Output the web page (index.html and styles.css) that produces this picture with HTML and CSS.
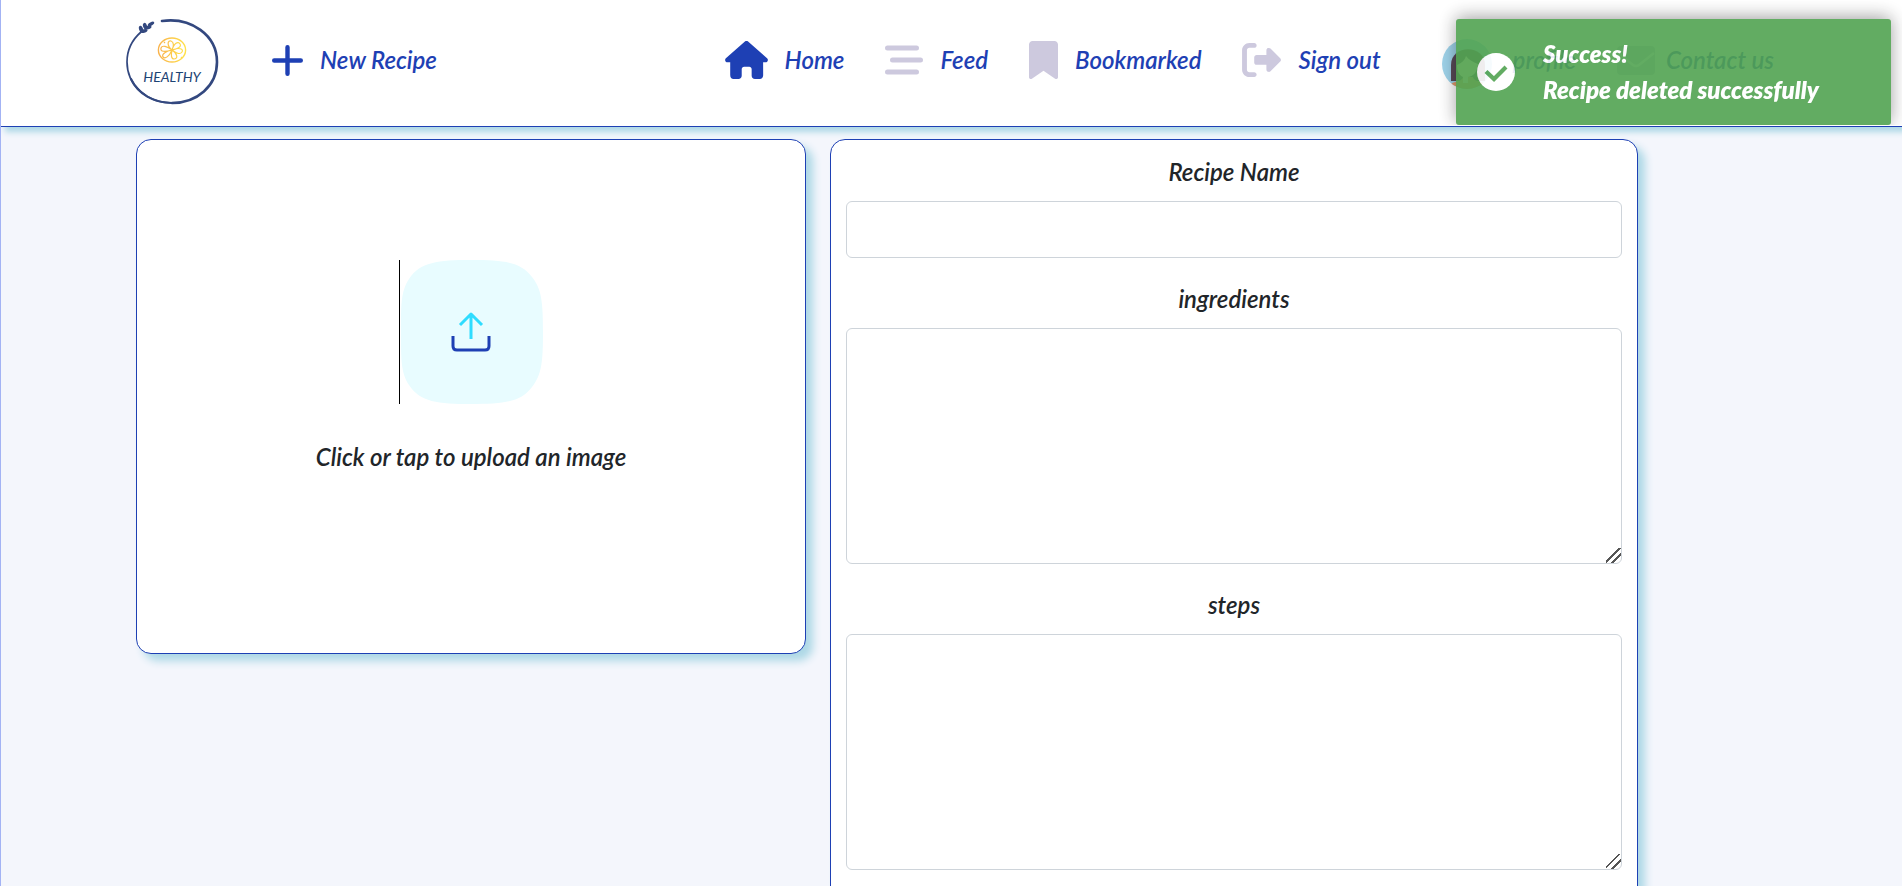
FILE: index.html
```html
<!DOCTYPE html>
<html lang="en">
<head>
<meta charset="utf-8">
<title>New Recipe</title>
<link rel="stylesheet" href="styles.css">
</head>
<body>
<header class="header">
  <a class="logo" href="#" aria-label="Healthy">
    <svg width="100" height="92" viewBox="0 0 100 92">
      <g fill="none" stroke="#33487f" stroke-linecap="round">
        <path d="M39 4C68 0 94 18 94 45C94 69 74 86 49 86" stroke-width="2.6"/>
        <path d="M49 86C24 86 4 68 4 45C4 33 10 22 18 15" stroke-width="1.7"/>
        <path d="M49 86C31 86 15 77 8 62" stroke-width="2.2"/>
      </g>
      <g fill="#33487f">
        <ellipse cx="18" cy="12" rx="3.4" ry="2" transform="rotate(75 18 12)"/>
        <ellipse cx="22" cy="9" rx="3.2" ry="2" transform="rotate(75 22 9)"/>
        <ellipse cx="21" cy="14" rx="3.6" ry="1.8" transform="rotate(-15 21 14)"/>
        <ellipse cx="25" cy="10.500" rx="3.6" ry="1.8" transform="rotate(-15 25 10.500)"/>
        <ellipse cx="28" cy="7" rx="3.6" ry="1.6" transform="rotate(-30 28 7)"/>
      </g>
      <defs>
        <linearGradient id="citrus"><stop offset="0" stop-color="#f9b34c"/><stop offset="1" stop-color="#ffe14a"/></linearGradient>
      </defs>
      <g fill="none" stroke="url(#citrus)">
        <ellipse cx="49" cy="33" rx="13.600" ry="12" stroke-width="1.4"/>
        <path stroke-width="1.2" d="M49 33C43 28 45 23 48 24C51 25 51 29 49 33C51 26 55 24 57 27C59 30 54 32 49 33C56 30 61 32 59 35C57 38 53 36 49 33C55 37 55 42 51 42C48 42 48 38 49 33C46 40 42 42 40 40C38 37 44 34 49 33C42 35 37 35 38 31C39 28 44 29 49 33M41 25l1 1M58 40l1 1"/>
      </g>
      <text class="logo-text" x="49" y="65" text-anchor="middle">HEALTHY</text>
    </svg>
  </a>
  <a class="nav-link" href="#">
    <svg width="31" height="31" viewBox="0 0 31 31" stroke="currentColor" stroke-width="4.4" stroke-linecap="round"><path d="M15.500 2.200v26.600M2.200 15.500h26.600"/></svg>
    <span>New Recipe</span>
  </a>
  <nav class="nav">
    <a class="nav-link" href="#">
      <svg width="43" height="38" viewBox="0 0 576 512" fill="currentColor"><path d="M575.800 255.500c0 18-15 32.100-32 32.100h-32l.7 170c0 34-20 54-45 54h-65c-28 0-45-18-45-43V380c0-17.700-14.300-32-32-32h-70c-17.700 0-32 14.300-32 32v88c0 25-17 43-45 43h-65c-28 0-45-20-45-54V287.600H32c-18 0-32-14-32-32.100 0-9 3-17 10-24L266.400 8c7-7 15-8 22-8s15 2 21 7L564.800 231.500c8 7 12 15 11 24z"/></svg>
      <span>Home</span>
    </a>
    <a class="nav-link" href="#">
      <svg class="muted" width="38" height="30" viewBox="0 0 38 30" stroke="currentColor" stroke-width="5" stroke-linecap="round"><path d="M2.500 3h29M7.500 15h28M2.500 27h29"/></svg>
      <span>Feed</span>
    </a>
    <a class="nav-link" href="#">
      <svg class="muted" width="29" height="38" viewBox="0 0 384 512" preserveAspectRatio="none" fill="currentColor"><path d="M0 48V487.700C0 501.100 10.900 512 24.300 512c5 0 9.900-1.500 14-4.400L192 400 345.700 507.600c4.100 2.900 9 4.400 14 4.400 13.400 0 24.300-10.900 24.300-24.300V48c0-26.500-21.500-48-48-48H48C21.500 0 0 21.500 0 48z"/></svg>
      <span>Bookmarked</span>
    </a>
    <a class="nav-link" href="#">
      <svg class="muted" width="39" height="34" viewBox="0 32 512 448" fill="currentColor"><path d="M160 416H96c-17.700 0-32-14.300-32-32V128c0-17.700 14.300-32 32-32h64c17.700 0 32-14.300 32-32s-14.300-32-32-32H96C43 32 0 75 0 128v256c0 53 43 96 96 96h64c17.700 0 32-14.300 32-32s-14.300-32-32-32zM502.600 233.400l-128-128c-9-9-20-11-33-7-13 5-21 16-21 31v62H192c-17.700 0-32 14.300-32 32v64c0 17.700 14.300 32 32 32h128.600v62c0 15 8 26 21 31 13 4 24 2 33-7l128-128c12.500-12.500 12.500-31.500 0-44z"/></svg>
      <span>Sign out</span>
    </a>
    <a class="nav-link profile" href="#">
      <svg class="avatar" width="50" height="50" viewBox="0 0 50 50"><defs><clipPath id="face"><circle cx="25" cy="25" r="25"/></clipPath></defs><g clip-path="url(#face)"><path fill="#9fd3ea" d="M0 0h50v50H0z"/><path fill="#594a58" d="M9 42V26C9 5 43 5 43 26v16z"/><path fill="#e39a6b" d="M5 50c3-9 15-6 16-12h10c1 6 13 3 16 12z"/><path fill="#fde0c8" d="M15 26c5-2 8-5 9-9 3 4 7 6 12 8-1 8-4 12-10 13v6h-5v-6c-4-2-6-6-6-12z"/></g></svg>
      <span>profile</span>
    </a>
    <a class="nav-link contact" href="#">
      <svg class="muted" width="38" height="29" viewBox="0 0 38 29"><rect width="38" height="29" rx="4" fill="currentColor"/><path d="M1 7l15 12q3 2 6 0L37 7" fill="none" stroke="#fff" stroke-width="2.500"/></svg>
      <span>Contact us</span>
    </a>
  </nav>
</header>
<div class="toast" role="status">
  <svg width="38" height="38" viewBox="0 0 38 38"><circle cx="19" cy="19" r="19" fill="#fff"/><path d="M9 18.500l8 7.500L29 14" fill="none" stroke="#51a351" stroke-width="4.200"/></svg>
  <div><div>Success!</div><div>Recipe deleted successfully</div></div>
</div>
<main class="page">
  <button class="card upload" type="button">
    <span class="upload-icon">
      <svg width="143" height="144" viewBox="0 0 143 144" fill="none" stroke-width="3">
        <path d="M1 72C1 44 1 31 9 19C20 2 38 0 71 0S121 2 132 17C142 29 143 44 143 72S142 115 132 127C121 142 104 144 71 144S20 142 9 125C1 113 1 100 1 72z" fill="#e8fcff"/>
        <g stroke-linejoin="round"><path d="M71 79V54M60 65l11-11 11 11" stroke="#2fdcff"/><path d="M53 76v10q0 4 4 4h28q4 0 4-4V76" stroke="#1e40b4"/></g>
      </svg>
    </span>
    <span>Click or tap to upload an image</span>
  </button>
  <form class="card recipe">
    <label for="name">Recipe Name</label>
    <input id="name" type="text">
    <label for="ingredients">ingredients</label>
    <textarea id="ingredients"></textarea>
    <label for="steps">steps</label>
    <textarea id="steps"></textarea>
  </form>
</main>
</body>
</html>
```
FILE: styles.css
```css
* { box-sizing: border-box; }
body {
  margin: 0;
  height: 100vh;
  overflow: hidden;
  background: #f4f6fc;
  color: #212529;
  border-left: 1px solid #a3b3f4;
  font: italic 600 24px/36px Lato, "Open Sans", sans-serif;
}
.header {
  display: flex;
  align-items: center;
  height: 127px;
  margin-left: -1px;
  padding: 0 128px 0 122px;
  background: #fff;
  border: solid #1e40b4;
  border-width: 0 0 1px 1px;
  box-shadow: 5px 5px 6px lightblue;
}
.logo { display: flex; margin-right: 49px; }
.logo-text { font: italic 400 14px Lato, sans-serif; fill: #1d4474; }
.nav-link {
  display: flex;
  align-items: center;
  gap: 17px;
  padding-bottom: 6px;
  color: #1e40b4;
  text-decoration: none;
  white-space: nowrap;
}
.nav { display: flex; gap: 41px; margin-left: auto; }
.muted { color: #cdc9de; }
.profile { gap: 21px; margin-left: 20px; }
.contact { gap: 11px; }
.avatar { margin-top: 8px; }
.toast {
  position: fixed;
  top: 19px;
  right: 11px;
  display: flex;
  align-items: center;
  gap: 28px;
  width: 435px;
  height: 106px;
  padding: 0 21px;
  border-radius: 3px;
  background: #51a351;
  color: #fff;
  font-weight: 800;
  opacity: 0.9;
  box-shadow: 0 -2px 18px rgb(0 0 0 / 42%);
  clip-path: inset(-30px -30px 0 -30px);
}
.page {
  display: grid;
  grid-template-columns: 670fr 808fr;
  align-items: start;
  gap: 24px;
  padding: 12px 264px 24px 135px;
}
.card {
  border: 1px solid #1e40b4;
  border-radius: 15px;
  background: #fff;
  box-shadow: 7px 7px 8px lightblue;
}
.upload {
  display: flex;
  flex-direction: column;
  align-items: center;
  gap: 35px;
  height: 515px;
  padding: 120px 16px;
  color: inherit;
  font: inherit;
}
.upload-icon {
  display: flex;
  border-left: 1px solid #000;
}
.recipe {
  display: flex;
  flex-direction: column;
  padding: 14px 15px;
  text-align: center;
}
.recipe label { margin-bottom: 11px; }
.recipe input, .recipe textarea {
  margin: 0 0 23px;
  padding: 6px 12px;
  border: 1px solid #ced4da;
  border-radius: 6px;
  background: #fff;
  font: inherit;
}
.recipe input { height: 57px; }
.recipe textarea { height: 236px; }
.recipe textarea::-webkit-resizer {
  background: linear-gradient(135deg, transparent 42%, #555 42% 50%, transparent 50% 66%, #555 66% 74%, transparent 74%);
}
```
